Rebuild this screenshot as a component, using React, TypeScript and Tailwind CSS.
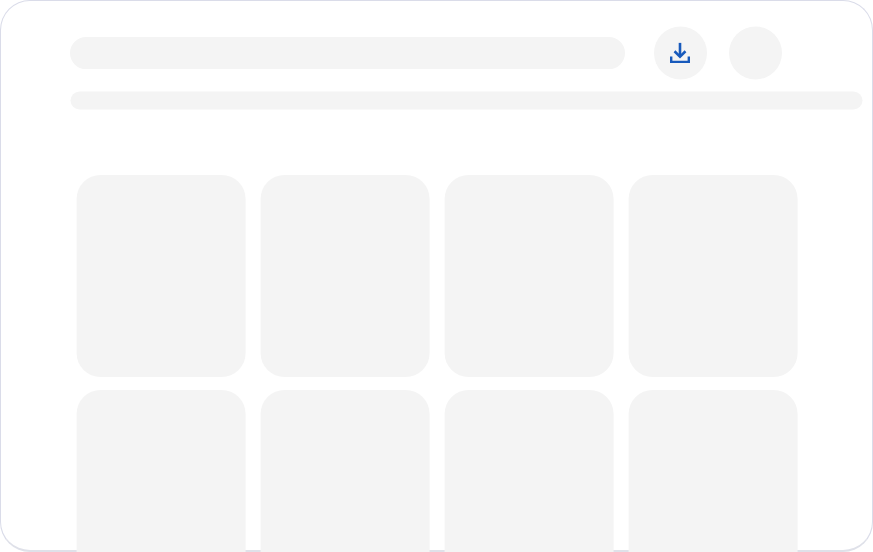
const cards = Array.from({ length: 8 }, (_, i) => i);

function DownloadIcon() {
  return (
    <svg width="22" height="22" viewBox="0 0.6 22 22" fill="none" stroke="#185abc" strokeWidth="2.6">
      <path d="M11 .8V14" />
      <path d="M5.5 9.4 11 14.7l5.5-5.3" />
      <path d="M2.2 14.6v5.4h17.6v-5.4" strokeWidth="2.4" />
    </svg>
  );
}

export default function App() {
  return (
    <div className="h-[552px] w-[873px] overflow-hidden bg-white">
      <main className="h-[552px] w-[873px] rounded-[30px] border border-b-2 border-[#dadce9] border-b-[#dfe1e9] bg-white pt-[25px]">
        <header className="ml-[69px] flex items-center">
          <div className="h-8 w-[555px] translate-y-[0.1px] rounded-full bg-[#f4f4f4]" />
          <button
            aria-label="Download"
            className="ml-[29px] flex size-[53px] translate-y-[0.5px] items-center rounded-full bg-[#f4f4f4] pl-[15px]"
          >
            <DownloadIcon />
          </button>
          <div className="ml-[22px] size-[53px] translate-y-[0.5px] rounded-full bg-[#f4f4f4]" />
        </header>
        <div className="mt-[12px] ml-[69px] h-[18px] w-[792px] translate-x-[0.5px] translate-y-[0.5px] rounded-full bg-[#f4f4f4]" />
        <section className="mt-[66px] ml-[76px] grid -translate-x-[0.4px] grid-cols-[repeat(4,169px)] gap-x-[15px] gap-y-[13px]">
          {cards.map((card) => (
            <div key={card} className="h-[202px] rounded-[24px] bg-[#f4f4f4]" />
          ))}
        </section>
      </main>
    </div>
  );
}
